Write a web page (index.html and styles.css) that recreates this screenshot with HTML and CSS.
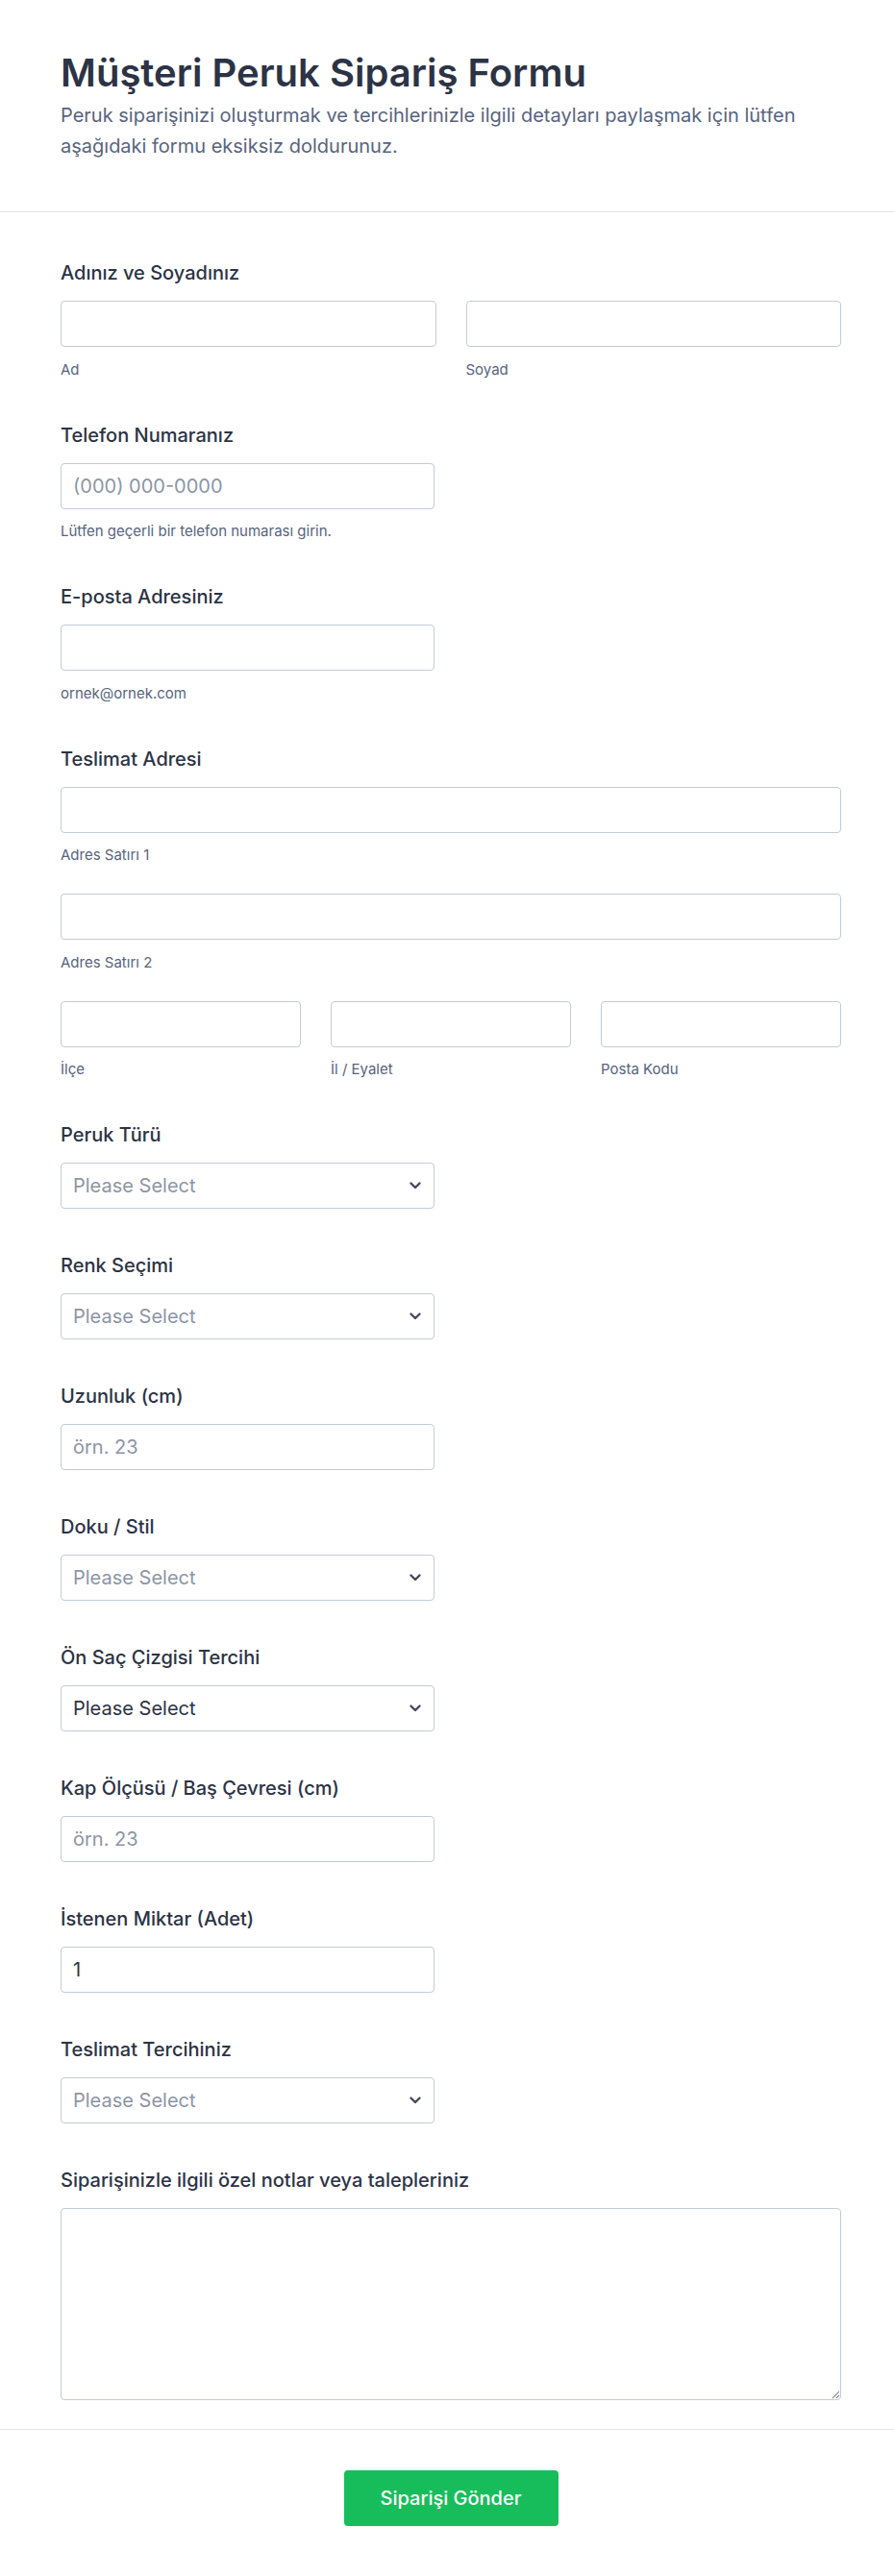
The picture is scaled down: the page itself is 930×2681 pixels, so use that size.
FILE: index.html
```html
<!DOCTYPE html>
<html lang="tr">
<head>
<meta charset="utf-8">
<title>Müşteri Peruk Sipariş Formu</title>
<link rel="stylesheet" href="styles.css">
</head>
<body>
<header class="header">
  <h1 class="title">Müşteri Peruk Sipariş Formu</h1>
  <p class="desc">Peruk siparişinizi oluşturmak ve tercihlerinizle ilgili detayları paylaşmak için lütfen aşağıdaki formu eksiksiz doldurunuz.</p>
</header>

<form class="form">
  <div class="field">
    <label class="label">Adınız ve Soyadınız</label>
    <div class="row two">
      <div class="col">
        <input class="input" type="text">
        <span class="sub">Ad</span>
      </div>
      <div class="col">
        <input class="input" type="text">
        <span class="sub">Soyad</span>
      </div>
    </div>
  </div>

  <div class="field">
    <label class="label">Telefon Numaranız</label>
    <div class="half">
      <input class="input" type="tel" placeholder="(000) 000-0000">
      <span class="sub">Lütfen geçerli bir telefon numarası girin.</span>
    </div>
  </div>

  <div class="field">
    <label class="label">E-posta Adresiniz</label>
    <div class="half">
      <input class="input" type="email">
      <span class="sub">ornek@ornek.com</span>
    </div>
  </div>

  <div class="field">
    <label class="label">Teslimat Adresi</label>
    <div class="addr-line">
      <input class="input" type="text">
      <span class="sub">Adres Satırı 1</span>
    </div>
    <div class="addr-line">
      <input class="input" type="text">
      <span class="sub">Adres Satırı 2</span>
    </div>
    <div class="row three">
      <div class="col">
        <input class="input" type="text">
        <span class="sub">İlçe</span>
      </div>
      <div class="col">
        <input class="input" type="text">
        <span class="sub">İl / Eyalet</span>
      </div>
      <div class="col">
        <input class="input" type="text">
        <span class="sub">Posta Kodu</span>
      </div>
    </div>
  </div>

  <div class="field">
    <label class="label">Peruk Türü</label>
    <div class="select-wrap">
      <select class="select placeholder"><option>Please Select</option></select>
      <svg class="chev" width="12" height="8" viewBox="0 0 12 8"><path d="M1.5 1.5 L6 6 L10.5 1.5" fill="none" stroke="currentColor" stroke-width="2.4" stroke-linecap="round" stroke-linejoin="round"/></svg>
    </div>
  </div>

  <div class="field">
    <label class="label">Renk Seçimi</label>
    <div class="select-wrap">
      <select class="select placeholder"><option>Please Select</option></select>
      <svg class="chev" width="12" height="8" viewBox="0 0 12 8"><path d="M1.5 1.5 L6 6 L10.5 1.5" fill="none" stroke="currentColor" stroke-width="2.4" stroke-linecap="round" stroke-linejoin="round"/></svg>
    </div>
  </div>

  <div class="field">
    <label class="label">Uzunluk (cm)</label>
    <div class="half">
      <input class="input" type="text" placeholder="örn. 23">
    </div>
  </div>

  <div class="field">
    <label class="label">Doku / Stil</label>
    <div class="select-wrap">
      <select class="select placeholder"><option>Please Select</option></select>
      <svg class="chev" width="12" height="8" viewBox="0 0 12 8"><path d="M1.5 1.5 L6 6 L10.5 1.5" fill="none" stroke="currentColor" stroke-width="2.4" stroke-linecap="round" stroke-linejoin="round"/></svg>
    </div>
  </div>

  <div class="field">
    <label class="label">Ön Saç Çizgisi Tercihi</label>
    <div class="select-wrap">
      <select class="select"><option>Please Select</option></select>
      <svg class="chev" width="12" height="8" viewBox="0 0 12 8"><path d="M1.5 1.5 L6 6 L10.5 1.5" fill="none" stroke="currentColor" stroke-width="2.4" stroke-linecap="round" stroke-linejoin="round"/></svg>
    </div>
  </div>

  <div class="field">
    <label class="label">Kap Ölçüsü / Baş Çevresi (cm)</label>
    <div class="half">
      <input class="input" type="text" placeholder="örn. 23">
    </div>
  </div>

  <div class="field">
    <label class="label">İstenen Miktar (Adet)</label>
    <div class="half">
      <input class="input" type="text" value="1">
    </div>
  </div>

  <div class="field">
    <label class="label">Teslimat Tercihiniz</label>
    <div class="select-wrap">
      <select class="select placeholder"><option>Please Select</option></select>
      <svg class="chev" width="12" height="8" viewBox="0 0 12 8"><path d="M1.5 1.5 L6 6 L10.5 1.5" fill="none" stroke="currentColor" stroke-width="2.4" stroke-linecap="round" stroke-linejoin="round"/></svg>
    </div>
  </div>

  <div class="field last">
    <label class="label">Siparişinizle ilgili özel notlar veya talepleriniz</label>
    <textarea class="textarea"></textarea>
  </div>
</form>

<footer class="footer">
  <button class="submit" type="button">Siparişi Gönder</button>
</footer>
</body>
</html>
```

FILE: styles.css
```css
* { box-sizing: border-box; }

body {
  margin: 0;
  background: #ffffff;
  font-family: Inter, "Noto Sans", "DejaVu Sans", sans-serif;
  color: #2c3345;
}

.header {
  padding: 52px 55px 52px 63px;
  border-bottom: 1px solid #e3e5ea;
}

.title {
  margin: 0;
  font-size: 40px;
  line-height: 48px;
  font-weight: 600;
  color: #2c3345;
}

.desc {
  margin: 4px 0 0;
  font-size: 20px;
  line-height: 32px;
  color: #57647e;
}

.form {
  padding: 51px 55px 30px 63px;
}

.field {
  margin-bottom: 47px;
}

.field.last {
  margin-bottom: 0;
}

.label {
  display: block;
  font-size: 20px;
  line-height: 24px;
  font-weight: 500;
  color: #2c3345;
  margin-bottom: 17px;
}

.row {
  display: grid;
  column-gap: 31px;
}

.row.two { grid-template-columns: 1fr 1fr; }
.row.three { grid-template-columns: 1fr 1fr 1fr; }

.col { display: flex; flex-direction: column; }

.half {
  width: 389px;
  display: flex;
  flex-direction: column;
}

.addr-line {
  display: flex;
  flex-direction: column;
  margin-bottom: 31px;
}

.input,
.select,
.textarea {
  display: block;
  width: 100%;
  height: 48px;
  padding: 0 12px;
  border: 1px solid #c3cad8;
  border-radius: 4px;
  background: #ffffff;
  font-family: Inter, "Noto Sans", sans-serif;
  font-size: 20px;
  color: #2c3345;
  outline: none;
}

.input::placeholder {
  color: #8d95a6;
  opacity: 1;
}

.sub {
  display: block;
  margin-top: 14.5px;
  font-size: 15px;
  line-height: 18px;
  color: #57647e;
}

.select-wrap {
  position: relative;
  width: 389px;
}

.select {
  appearance: none;
  -webkit-appearance: none;
  padding-right: 40px;
}

.select.placeholder {
  color: #8d95a6;
}

.chev {
  position: absolute;
  right: 14px;
  top: 20px;
  color: #434b5e;
  pointer-events: none;
}

.textarea {
  height: 200px;
  padding: 12px;
  resize: vertical;
}

.footer {
  border-top: 1px solid #e3e5ea;
  padding: 42px 55px 51px 63px;
  text-align: center;
}

.submit {
  display: inline-block;
  width: 223px;
  height: 58px;
  border: 0;
  border-radius: 4px;
  background: #18bd5b;
  color: #ffffff;
  font-family: Inter, "Noto Sans", sans-serif;
  font-size: 20px;
  font-weight: 500;
}
```
